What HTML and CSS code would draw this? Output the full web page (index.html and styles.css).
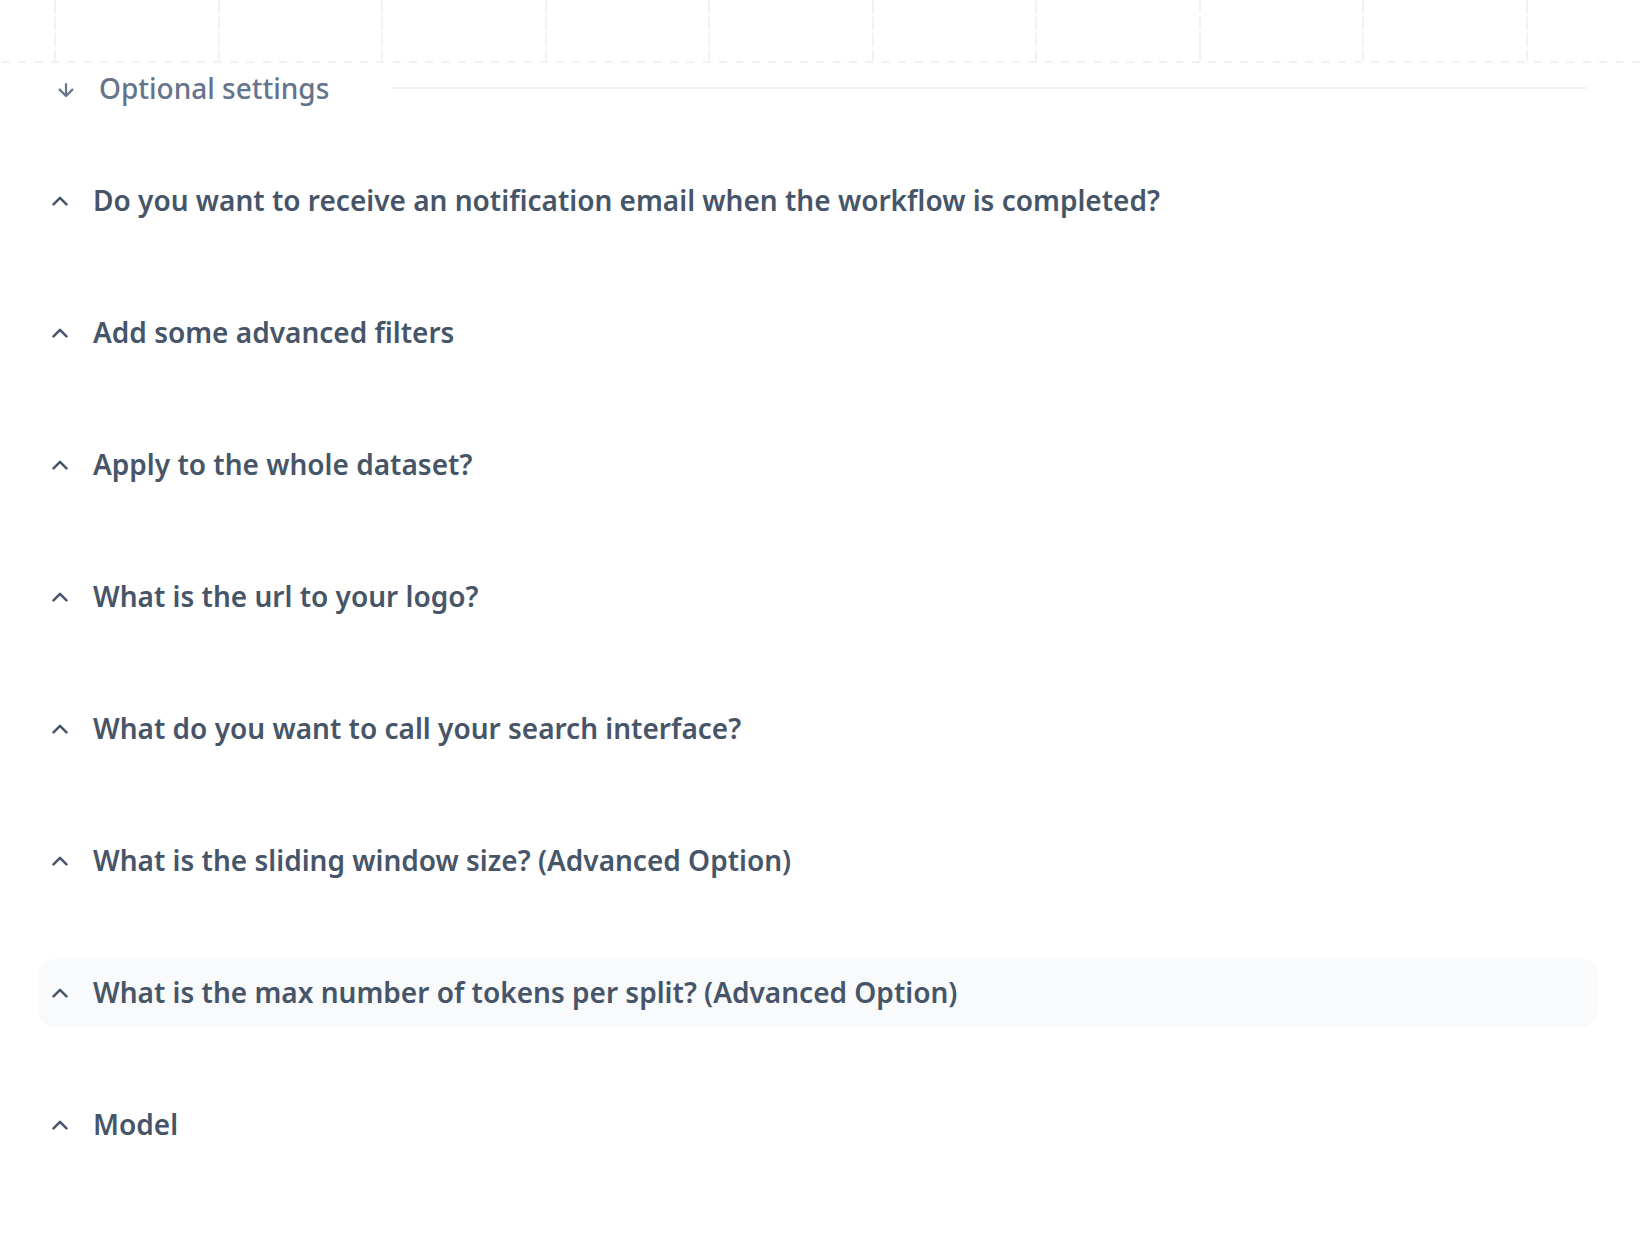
FILE: index.html
```html
<!DOCTYPE html>
<html lang="en">
<head>
<meta charset="utf-8">
<title>Optional settings</title>
<link rel="stylesheet" href="styles.css">
</head>
<body>
<div class="calendar">
  <div class="calendar-row">
    <div class="cell"></div><div class="cell"></div><div class="cell"></div><div class="cell"></div>
    <div class="cell"></div><div class="cell"></div><div class="cell"></div><div class="cell"></div>
    <div class="cell"></div><div class="cell"></div><div class="cell"></div>
  </div>
</div>
<main class="page">
  <div class="section-header">
    <svg class="arrow" width="16" height="14" viewBox="0 0 16 14" aria-hidden="true">
      <path d="M8 1.2 V12.4 M1.6 6.6 L8 13 L14.4 6.6" fill="none" stroke="currentColor" stroke-width="2.2" stroke-linecap="round" stroke-linejoin="round"/>
    </svg>
    <span class="section-title">Optional settings</span>
    <span class="divider"></span>
  </div>
  <ul class="questions">
    <li class="question"><svg class="chev" width="16" height="10" viewBox="0 0 16 10" aria-hidden="true"><path d="M1.5 8.3 L8 1.8 L14.5 8.3" fill="none" stroke="currentColor" stroke-width="2.5" stroke-linecap="round" stroke-linejoin="round"/></svg><span class="q-text">Do you want to receive an notification email when the workflow is completed?</span></li>
    <li class="question"><svg class="chev" width="16" height="10" viewBox="0 0 16 10" aria-hidden="true"><path d="M1.5 8.3 L8 1.8 L14.5 8.3" fill="none" stroke="currentColor" stroke-width="2.5" stroke-linecap="round" stroke-linejoin="round"/></svg><span class="q-text">Add some advanced filters</span></li>
    <li class="question"><svg class="chev" width="16" height="10" viewBox="0 0 16 10" aria-hidden="true"><path d="M1.5 8.3 L8 1.8 L14.5 8.3" fill="none" stroke="currentColor" stroke-width="2.5" stroke-linecap="round" stroke-linejoin="round"/></svg><span class="q-text">Apply to the whole dataset?</span></li>
    <li class="question"><svg class="chev" width="16" height="10" viewBox="0 0 16 10" aria-hidden="true"><path d="M1.5 8.3 L8 1.8 L14.5 8.3" fill="none" stroke="currentColor" stroke-width="2.5" stroke-linecap="round" stroke-linejoin="round"/></svg><span class="q-text">What is the url to your logo?</span></li>
    <li class="question"><svg class="chev" width="16" height="10" viewBox="0 0 16 10" aria-hidden="true"><path d="M1.5 8.3 L8 1.8 L14.5 8.3" fill="none" stroke="currentColor" stroke-width="2.5" stroke-linecap="round" stroke-linejoin="round"/></svg><span class="q-text">What do you want to call your search interface?</span></li>
    <li class="question"><svg class="chev" width="16" height="10" viewBox="0 0 16 10" aria-hidden="true"><path d="M1.5 8.3 L8 1.8 L14.5 8.3" fill="none" stroke="currentColor" stroke-width="2.5" stroke-linecap="round" stroke-linejoin="round"/></svg><span class="q-text">What is the sliding window size? (Advanced Option)</span></li>
    <li class="question is-hover"><svg class="chev" width="16" height="10" viewBox="0 0 16 10" aria-hidden="true"><path d="M1.5 8.3 L8 1.8 L14.5 8.3" fill="none" stroke="currentColor" stroke-width="2.5" stroke-linecap="round" stroke-linejoin="round"/></svg><span class="q-text">What is the max number of tokens per split? (Advanced Option)</span></li>
    <li class="question"><svg class="chev" width="16" height="10" viewBox="0 0 16 10" aria-hidden="true"><path d="M1.5 8.3 L8 1.8 L14.5 8.3" fill="none" stroke="currentColor" stroke-width="2.5" stroke-linecap="round" stroke-linejoin="round"/></svg><span class="q-text">Model</span></li>
  </ul>
</main>
</body>
</html>
```
FILE: styles.css
```css
html, body {
  margin: 0;
  padding: 0;
  background: #ffffff;
}
body {
  width: 1646px;
  height: 1242px;
  overflow: hidden;
  font-family: "Noto Sans", "Open Sans", "Liberation Sans", sans-serif;
}

/* top calendar-like dashed grid */
.calendar {
  height: 63px;
  overflow: hidden;
  background-image: linear-gradient(to right, #eff0f8 50%, transparent 50%);
  background-size: 16.3px 2px;
  background-repeat: repeat-x;
  background-position: 2px 61px;
}
.calendar-row {
  display: flex;
  margin-left: -107.5px;
  height: 61px;
}
.cell {
  flex: 0 0 163.5px;
  height: 61px;
  background-image: linear-gradient(to bottom, #f1f2f9 80%, transparent 80%);
  background-size: 2px 16.5px;
  background-repeat: repeat-y;
  background-position: right top;
}

.page {
  padding: 0 48px 0 38px;
}

.section-header {
  display: flex;
  align-items: center;
  height: 52px;
  padding: 0 12px 0 20px;
  color: #64748b;
}
.arrow {
  flex: 0 0 auto;
  margin-top: 1px;
}
.section-title {
  margin-left: 25px;
  margin-bottom: 3px;
  font-size: 28px;
  font-weight: 500;
  line-height: 36px;
  color: #64748b;
  white-space: nowrap;
}
.divider {
  flex: 1 1 auto;
  height: 2px;
  margin-left: 63px;
  margin-top: -2px;
  background: #edf0f9;
}

.questions {
  list-style: none;
  margin: 0;
  padding: 52px 0 0 0;
  display: flex;
  flex-direction: column;
  gap: 64px;
}
.question {
  display: flex;
  align-items: center;
  height: 68px;
  padding-left: 14px;
  border-radius: 16px;
  color: #475569;
}
.question.is-hover {
  background: #f8fafc;
}
.chev {
  flex: 0 0 auto;
  color: #475569;
}
.q-text {
  margin-left: 25px;
  margin-bottom: 2px;
  font-size: 28px;
  font-weight: 600;
  line-height: 36px;
  white-space: nowrap;
}
```
